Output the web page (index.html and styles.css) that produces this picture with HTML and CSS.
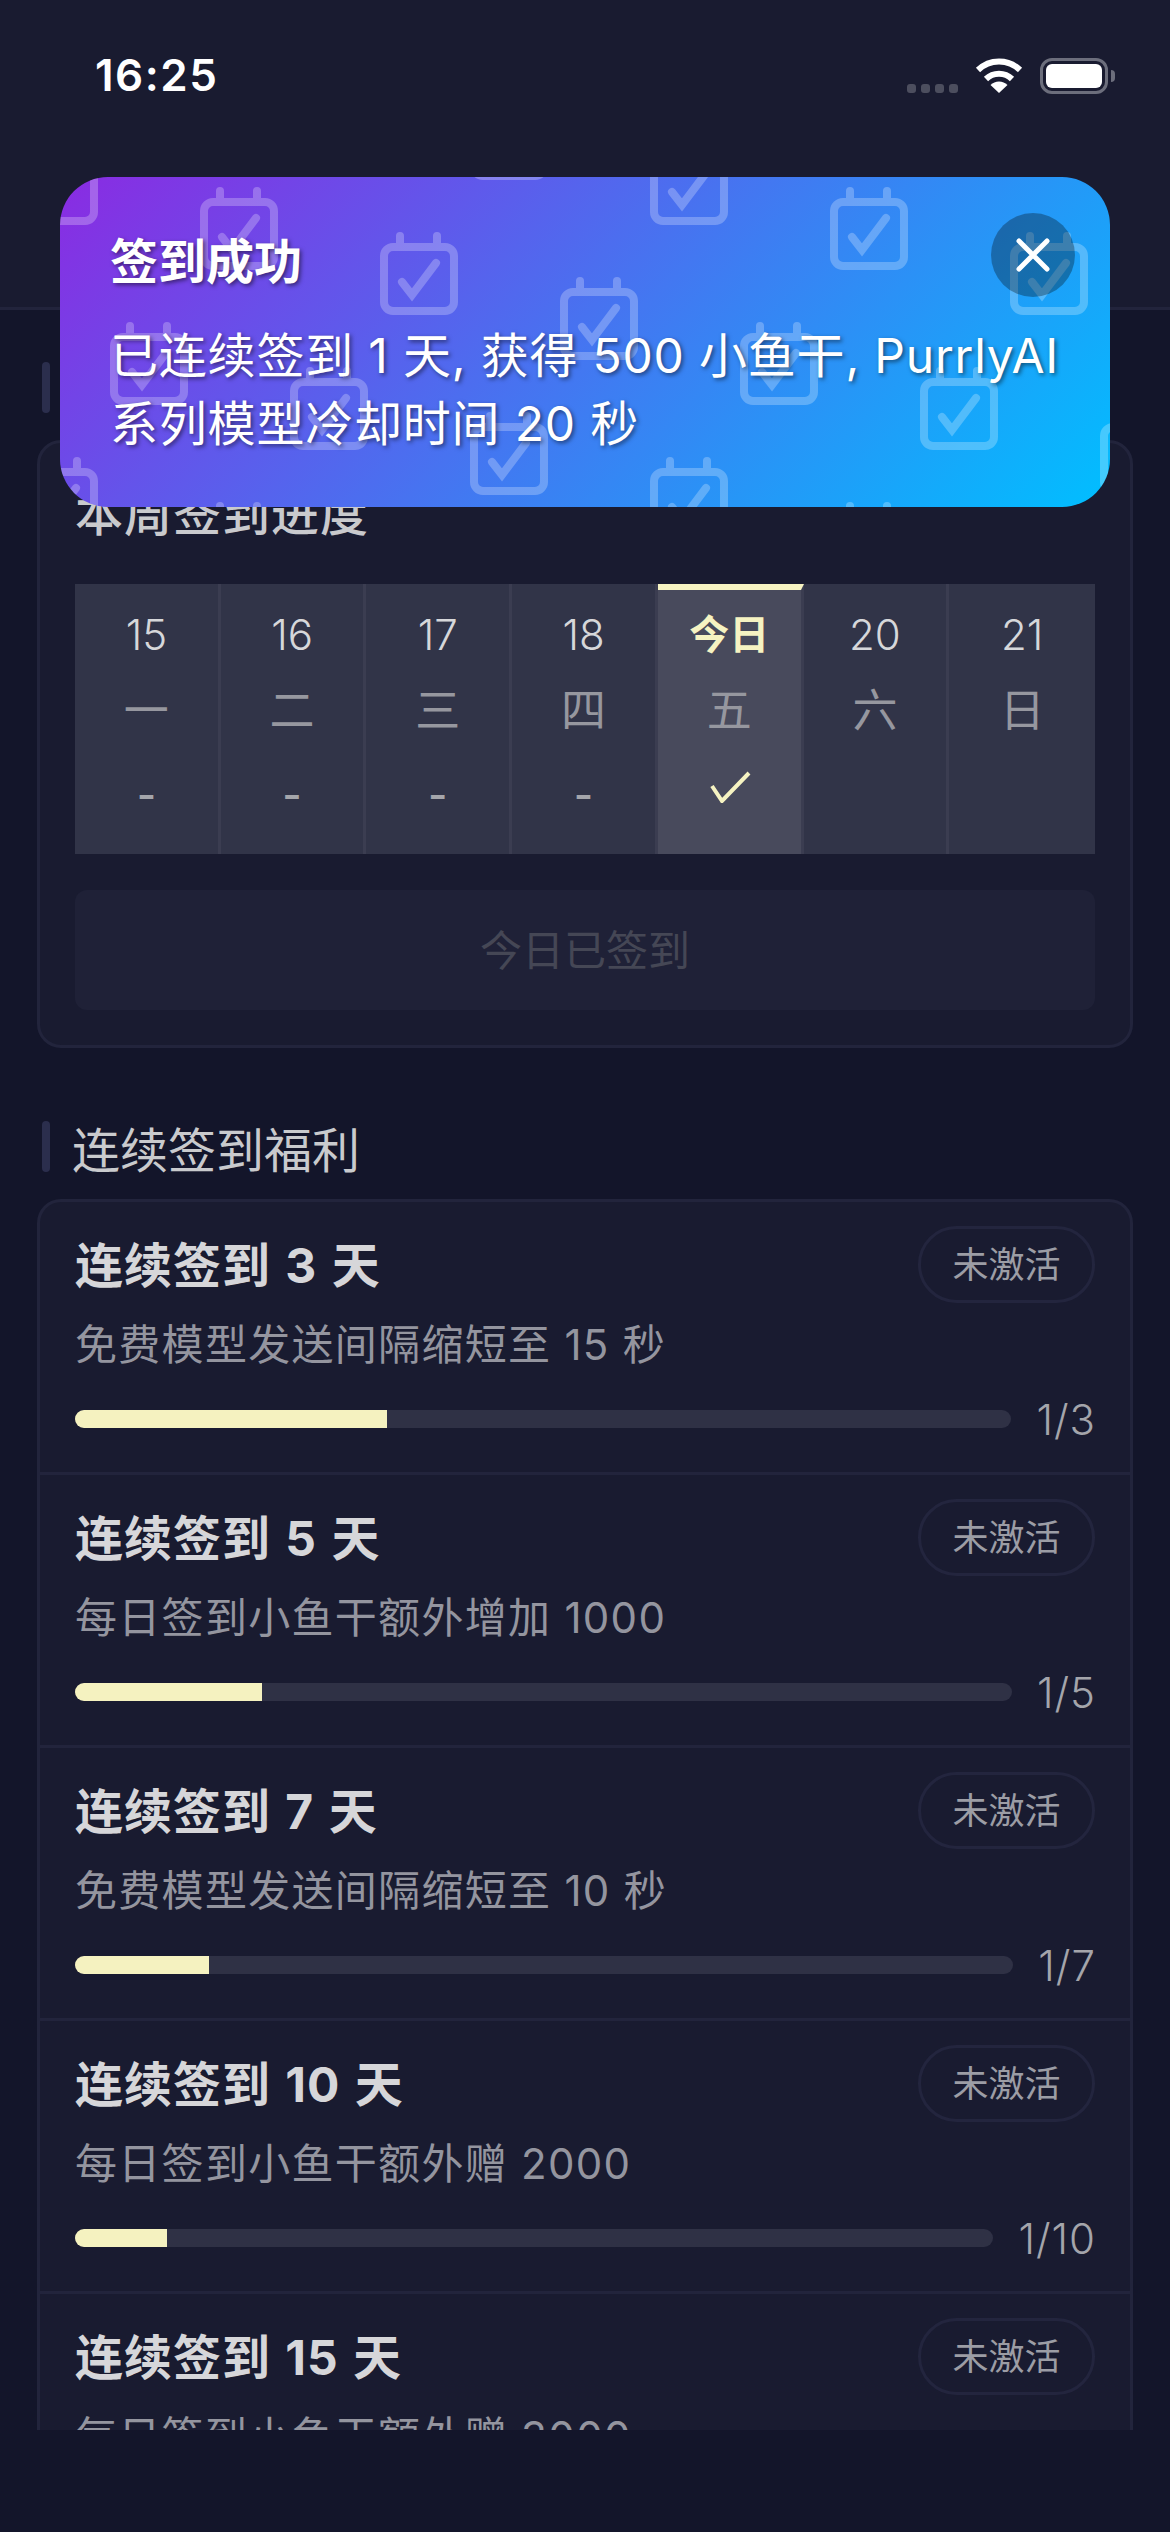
FILE: index.html
```html
<!DOCTYPE html>
<html lang="zh-CN">
<head>
    <meta charset="UTF-8">
    <title>签到</title>
    <link rel="stylesheet" href="styles.css">
</head>
<body>
<div id="page">
    <div class="topbar">
        <div class="status">
            <span class="time">16:25</span>
            <div class="status-icons">
                <div class="signal"><i></i><i></i><i></i><i></i></div>
                <svg class="wifi" width="48" height="36" viewBox="0 0 48 36">
                    <path d="M3 13A30 30 0 0 1 45 13" fill="none" stroke="#fff" stroke-width="6"/>
                    <path d="M11 22A18.500 18.500 0 0 1 37 22" fill="none" stroke="#fff" stroke-width="6"/>
                    <path d="M15.500 28A12 12 0 0 1 32.500 28L24 36Z" fill="#fff"/>
                </svg>
                <div class="battery"><div class="battery-level"></div></div>
            </div>
        </div>
    </div>

    <div class="scroll">
        <div class="section-head"><span class="section-bar"></span></div>
        <div class="card week-card">
            <div class="week-title">本周签到进度</div>
            <div class="week-grid">
                <div class="day"><span class="day-num">15</span><span class="day-name">一</span><span class="day-mark">-</span></div>
                <div class="day"><span class="day-num">16</span><span class="day-name">二</span><span class="day-mark">-</span></div>
                <div class="day"><span class="day-num">17</span><span class="day-name">三</span><span class="day-mark">-</span></div>
                <div class="day"><span class="day-num">18</span><span class="day-name">四</span><span class="day-mark">-</span></div>
                <div class="day today">
                    <span class="day-num">今日</span><span class="day-name">五</span>
                    <span class="day-mark">
                        <svg width="42" height="32" viewBox="0 0 42 32"><path d="M2 15L12 30L39 2" fill="none" stroke="#f6f3c2" stroke-width="4"/></svg>
                    </span>
                </div>
                <div class="day"><span class="day-num">20</span><span class="day-name">六</span><span class="day-mark"></span></div>
                <div class="day"><span class="day-num">21</span><span class="day-name">日</span><span class="day-mark"></span></div>
            </div>
            <button class="sign-btn" disabled>今日已签到</button>
        </div>

        <div class="section-head second"><span class="section-bar"></span><span>连续签到福利</span></div>
        <div class="card perk-card">
            <div class="perk">
                <div class="perk-head"><span class="perk-title">连续签到 3 天</span><span class="perk-badge">未激活</span></div>
                <div class="perk-desc">免费模型发送间隔缩短至 15 秒</div>
                <div class="perk-progress">
                    <div class="bar"><div class="bar-fill" style="width: 33.33%"></div></div>
                    <span class="bar-label">1/3</span>
                </div>
            </div>
            <div class="perk">
                <div class="perk-head"><span class="perk-title">连续签到 5 天</span><span class="perk-badge">未激活</span></div>
                <div class="perk-desc">每日签到小鱼干额外增加 1000</div>
                <div class="perk-progress">
                    <div class="bar"><div class="bar-fill" style="width: 20%"></div></div>
                    <span class="bar-label">1/5</span>
                </div>
            </div>
            <div class="perk">
                <div class="perk-head"><span class="perk-title">连续签到 7 天</span><span class="perk-badge">未激活</span></div>
                <div class="perk-desc">免费模型发送间隔缩短至 10 秒</div>
                <div class="perk-progress">
                    <div class="bar"><div class="bar-fill" style="width: 14.29%"></div></div>
                    <span class="bar-label">1/7</span>
                </div>
            </div>
            <div class="perk">
                <div class="perk-head"><span class="perk-title">连续签到 10 天</span><span class="perk-badge">未激活</span></div>
                <div class="perk-desc">每日签到小鱼干额外赠 2000</div>
                <div class="perk-progress">
                    <div class="bar"><div class="bar-fill" style="width: 10%"></div></div>
                    <span class="bar-label">1/10</span>
                </div>
            </div>
            <div class="perk">
                <div class="perk-head"><span class="perk-title">连续签到 15 天</span><span class="perk-badge">未激活</span></div>
                <div class="perk-desc">每日签到小鱼干额外赠 3000</div>
            </div>
        </div>
    </div>

    <!-- 签到成功提示 -->
    <div class="toast">
        <svg class="toast-bg" width="1050" height="330">
            <defs>
                <g id="cal" fill="none" stroke="#fff" stroke-width="8" stroke-linecap="round">
                    <rect x="4" y="4" width="70" height="64" rx="9"/>
                    <path d="M20 -7V4M57 -7V4" />
                    <path d="M22 39L32 52L56 20"/>
                </g>
                <pattern id="cal-tile" width="630" height="315" patternUnits="userSpaceOnUse" patternTransform="translate(-40 -44)">
                    <use href="#cal" x="0" y="20"/>
                    <use href="#cal" x="180" y="65"/>
                    <use href="#cal" x="360" y="110"/>
                    <use href="#cal" x="540" y="155"/>
                    <use href="#cal" x="90" y="200"/>
                    <use href="#cal" x="270" y="245"/>
                    <use href="#cal" x="270" y="-70"/>
                    <use href="#cal" x="450" y="290"/>
                    <use href="#cal" x="450" y="-25"/>
                </pattern>
            </defs>
            <rect width="1050" height="330" fill="url(#cal-tile)" opacity="0.25"/>
        </svg>
        <div class="toast-text">
            <div class="toast-title">签到成功</div>
            <div class="toast-msg">已连续签到 1 天, 获得 500 小鱼干, PurrlyAI 系列模型冷却时间 20 秒</div>
        </div>
        <button class="toast-close">
            <svg width="34" height="34" viewBox="0 0 34 34"><path d="M3 3L31 31M31 3L3 31" stroke="#fff" stroke-width="5" stroke-linecap="round"/></svg>
        </button>
    </div>
</div>
</body>
</html>
```

FILE: styles.css
```css
* {
    margin: 0;
    padding: 0;
    box-sizing: border-box;
}
body {
    width: 1170px;
    height: 2532px;
    overflow: hidden;
    background-color: #13152a;
    font-family: Inter, "Noto Sans CJK SC", sans-serif;
}
#page {
    position: relative;
    display: flex;
    flex-direction: column;
    width: 1170px;
    height: 2532px;
}

/* 顶部状态栏 */
.topbar {
    display: flow-root;
    height: 310px;
    background-color: #191b30;
    border-bottom: 3px solid #22243c;
}
.status {
    display: flex;
    justify-content: space-between;
    align-items: center;
    height: 74px;
    margin-top: 38px;
    padding: 0 62px 0 95px;
}
.time {
    font-size: 44px;
    font-weight: 600;
    letter-spacing: 1.5px;
    color: #fff;
}
.status-icons {
    display: flex;
    align-items: flex-end;
}
.signal {
    display: flex;
    gap: 5px;
    margin-right: 17px;
    margin-bottom: 1px;
}
.signal i {
    width: 9px;
    height: 9px;
    border-radius: 3px;
    background-color: #4c4e5e;
}
.wifi {
    margin-right: 17px;
    margin-bottom: 1px;
}
.battery {
    position: relative;
    width: 68px;
    height: 36px;
    padding: 3px;
    border: 3px solid #6c6e7c;
    border-radius: 12px;
}
.battery:after {
    content: "";
    position: absolute;
    top: 9px;
    right: -10px;
    width: 4px;
    height: 12px;
    border-radius: 0 4px 4px 0;
    background-color: #6c6e7c;
}
.battery-level {
    height: 100%;
    border-radius: 6px;
    background-color: #fff;
}

/* 滚动区 */
.scroll {
    height: 2120px;
    overflow: hidden;
    padding: 52px 37px 0;
}
.section-head {
    display: flex;
    align-items: center;
    gap: 22px;
    height: 51px;
    margin-bottom: 27px;
    padding-left: 5px;
    font-size: 48px;
    color: #c9cacd;
}
.section-head.second {
    margin-top: 73px;
}
.section-bar {
    width: 8px;
    height: 51px;
    border-radius: 4px;
    background-color: #2b2e4d;
}
.card {
    border: 3px solid #22243c;
    border-radius: 24px;
    background-color: #191b30;
}
.week-card {
    padding: 35px;
}
.week-title {
    height: 72px;
    margin-bottom: 34px;
    font-size: 48px;
    font-weight: 500;
    letter-spacing: 1px;
    line-height: 72px;
    color: #c9cacd;
}
.week-grid {
    display: grid;
    grid-template-columns: repeat(7, 1fr);
    height: 270px;
}
.day {
    display: flex;
    flex-direction: column;
    align-items: center;
    padding-top: 13px;
    background-color: #313448;
    border-right: 3px solid #3b3d51;
}
.day:last-child {
    border-right: none;
}
.day > span {
    height: 76px;
    line-height: 76px;
}
.day-num {
    font-size: 42px;
    font-weight: 300;
    color: #d6d7da;
}
.day-name {
    font-size: 45px;
    color: #96979f;
}
.day > .day-mark {
    padding-top: 8px;
    font-size: 42px;
    font-weight: 500;
    color: #a4a5ab;
}
.day-mark svg {
    display: block;
    margin: 14px 0 0 4px;
}
.today {
    padding-top: 7px;
    background-color: #484a5c;
    border-top: 6px solid #f6f3c2;
}
.today .day-num {
    font-size: 40px;
    font-weight: 700;
    color: #f6f3c2;
}
.sign-btn {
    display: block;
    width: 100%;
    height: 120px;
    margin-top: 36px;
    padding-bottom: 5px;
    border: none;
    outline: none;
    border-radius: 12px;
    background-color: #1f2137;
    font-family: inherit;
    font-size: 42px;
    color: #454755;
}

/* 福利列表 */
.perk-card {
    border-bottom: none;
    border-radius: 24px 24px 0 0;
}
.perk {
    padding: 24px 24px 27px 35px;
    border-bottom: 3px solid #22243c;
}
.perk-head {
    display: flex;
    justify-content: space-between;
    align-items: center;
    height: 77px;
    padding-right: 11px;
}
.perk-title {
    padding-bottom: 6px;
    font-size: 48px;
    font-weight: 700;
    letter-spacing: 1px;
    word-spacing: 2px;
    color: #d6d6d9;
}
.perk-badge {
    width: 177px;
    height: 77px;
    border: 3px solid #23253e;
    border-radius: 39px;
    font-size: 36px;
    line-height: 73px;
    text-align: center;
    color: #9c9da5;
}
.perk-desc {
    height: 56px;
    margin-top: 14px;
    font-size: 42px;
    letter-spacing: 1.300px;
    line-height: 56px;
    color: #94959f;
}
.perk-progress {
    display: flex;
    align-items: center;
    gap: 25px;
    height: 52px;
    margin-top: 20px;
    padding-right: 10px;
}
.bar {
    flex: 1;
    height: 18px;
    overflow: hidden;
    border-radius: 9px;
    background-color: #2f3145;
}
.bar-fill {
    height: 100%;
    background-color: #f5f2c0;
}
.bar-label {
    font-size: 42px;
    font-weight: 300;
    letter-spacing: 1px;
    color: #a4a5ab;
}

/* 提示框 */
.toast {
    position: absolute;
    top: 177px;
    left: 60px;
    width: 1050px;
    height: 330px;
    overflow: hidden;
    border-radius: 48px;
    background: linear-gradient(135deg, #8a2be2, #00bfff);
}
.toast-bg {
    position: absolute;
    top: 0;
    left: 0;
}
.toast-text {
    position: relative;
    padding: 51px 30px 0 50px;
    color: #fff;
    text-shadow: 2px 2px 4px rgba(0, 0, 0, 0.5);
}
.toast-title {
    height: 68px;
    font-size: 48px;
    font-weight: 700;
    line-height: 68px;
}
.toast-msg {
    margin-top: 26px;
    font-size: 48px;
    letter-spacing: 0.800px;
    line-height: 68px;
}
.toast-close {
    position: absolute;
    top: 36px;
    right: 35px;
    display: flex;
    justify-content: center;
    align-items: center;
    width: 84px;
    height: 84px;
    border: none;
    outline: none;
    border-radius: 50%;
    background-color: rgba(0, 0, 0, 0.3);
}
```
